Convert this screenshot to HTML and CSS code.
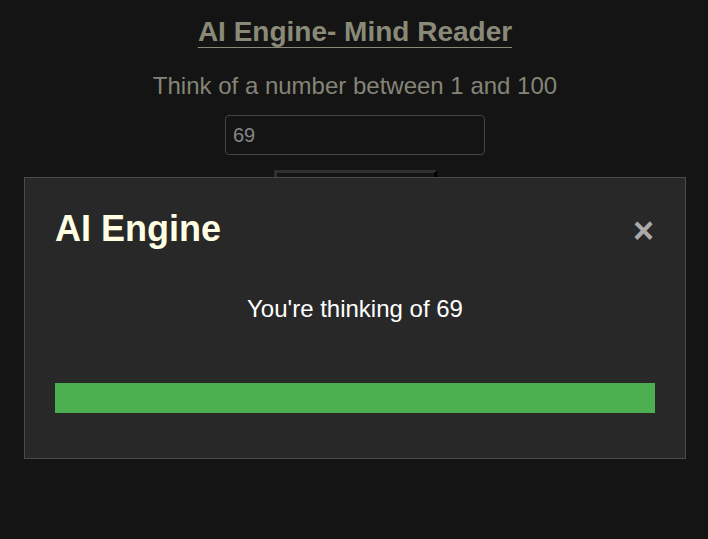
FILE: index.html
```html
<!DOCTYPE html>
<html lang="en">
<head>
<meta charset="utf-8">
<title>AI Engine- Mind Reader</title>
<link rel="stylesheet" href="styles.css">
</head>
<body>
<main class="page">
  <h1 class="title">AI Engine- Mind Reader</h1>
  <p class="prompt">Think of a number between 1 and 100</p>
  <input class="guess" type="text" value="69">
  <button class="read-btn" type="button">Read my mind</button>
</main>
<div class="overlay">
  <section class="modal">
    <header class="modal-head">
      <h2 class="modal-title">AI Engine</h2>
      <span class="close">&times;</span>
    </header>
    <p class="modal-text">You're thinking of 69</p>
    <div class="progress"></div>
  </section>
</div>
</body>
</html>
```
FILE: styles.css
```css
html, body {
  margin: 0;
  padding: 0;
  background: #141414;
  height: 100%;
}
body {
  font-family: "Liberation Sans", Arial, sans-serif;
}
.page {
  display: flex;
  flex-direction: column;
  align-items: center;
  padding-left: 2px;
}
.title {
  margin: 16px 0 0;
  font-size: 28px;
  line-height: 32px;
  font-weight: bold;
  color: #8a8a78;
  text-decoration: underline;
  text-underline-offset: 6px;
  text-decoration-thickness: 1px;
}
.prompt {
  margin: 24px 0 0;
  font-size: 24px;
  line-height: 28px;
  color: #858577;
}
.guess {
  box-sizing: border-box;
  margin-top: 15px;
  width: 260px;
  height: 40px;
  padding: 0 7px;
  background: #141414;
  border: 1px solid #444;
  border-radius: 4px;
  color: #858585;
  font-family: "Liberation Sans", Arial, sans-serif;
  font-size: 20px;
  outline: none;
}
.read-btn {
  box-sizing: border-box;
  margin-top: 15px;
  width: 163px;
  height: 40px;
  background: #141414;
  border-width: 3px;
  border-style: solid;
  border-color: #303030 #000 #000 #303030;
  color: #888;
  font-family: "Liberation Sans", Arial, sans-serif;
  font-size: 18px;
}
.overlay {
  position: fixed;
  inset: 0;
}
.modal {
  position: absolute;
  left: 24px;
  top: 177px;
  width: 600px;
  padding: 30px;
  background: #282828;
  border: 1px solid #4a4a4a;
  display: flex;
  flex-direction: column;
}
.modal-head {
  display: flex;
  justify-content: space-between;
  align-items: center;
  height: 41px;
}
.modal-title {
  margin: 0;
  font-size: 36px;
  line-height: 41px;
  font-weight: bold;
  color: #fffde2;
}
.close {
  color: #aaaaaa;
  font-size: 36px;
  font-weight: bold;
  line-height: 41px;
  margin-top: 4px;
  margin-right: 1px;
}
.modal-text {
  margin: 46px 0 0;
  text-align: center;
  font-size: 24px;
  line-height: 28px;
  color: #ffffff;
}
.progress {
  margin-top: 60px;
  height: 30px;
  background: #4caf50;
  margin-bottom: 15px;
}
```
